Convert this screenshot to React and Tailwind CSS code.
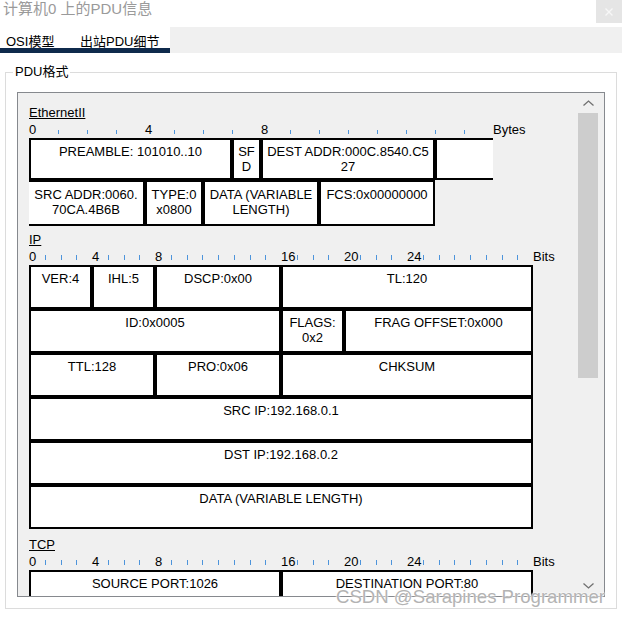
import React from "react";

const cellBase =
  "shrink-0 border-2 border-black bg-white text-center text-[13px] leading-[15px] whitespace-nowrap";

const byteMarks = { 0: "0", 4: "4", 8: "8" };
const bitMarks = { 0: "0", 4: "4", 8: "8", 16: "16", 20: "20", 24: "24" };

function ByteRuler() {
  return (
    <div className="mt-[2px] flex h-[16px] text-[13px] leading-[15px]">
      {Array.from({ length: 16 }).map((_, i) => (
        <div key={i} className="h-[16px] w-[29px] shrink-0">
          {byteMarks[i] ? (
            <span>{byteMarks[i]}</span>
          ) : (
            <div className="mt-[8px] h-[4px] w-px bg-[#4d94db]" />
          )}
        </div>
      ))}
      <span>Bytes</span>
    </div>
  );
}

function BitRuler() {
  return (
    <div className="mt-[2px] flex h-[16px] text-[13px] leading-[15px]">
      {Array.from({ length: 32 }).map((_, i) => (
        <div key={i} className="h-[16px] w-[15.75px] shrink-0">
          {bitMarks[i] ? (
            <span className="whitespace-nowrap">{bitMarks[i]}</span>
          ) : (
            <div className="mt-[6px] h-[5px] w-px bg-[#4d94db]" />
          )}
        </div>
      ))}
      <span>Bits</span>
    </div>
  );
}

function Heading({ children }) {
  return <div className="h-[15px] text-[13px] leading-[15px] underline">{children}</div>;
}

const ipRows = [
  [
    ["w-[63px]", "VER:4"],
    ["w-[63px]", "IHL:5"],
    ["w-[126px]", "DSCP:0x00"],
    ["w-[252px]", "TL:120"],
  ],
  [
    ["w-[252px]", "ID:0x0005"],
    ["w-[63px]", <>FLAGS:<br />0x2</>],
    ["w-[189px]", "FRAG OFFSET:0x000"],
  ],
  [
    ["w-[126px]", "TTL:128"],
    ["w-[126px]", "PRO:0x06"],
    ["w-[252px]", "CHKSUM"],
  ],
  [["w-[504px]", "SRC IP:192.168.0.1"]],
  [["w-[504px]", "DST IP:192.168.0.2"]],
  [["w-[504px]", "DATA (VARIABLE LENGTH)"]],
];

function Chevron({ down }) {
  return (
    <svg width="11" height="6" viewBox="0 0 11 6" fill="none">
      <polyline
        points={down ? "0.5,0.5 5.5,5 10.5,0.5" : "0.5,5.5 5.5,1 10.5,5.5"}
        stroke="#707070"
        strokeWidth="1.3"
      />
    </svg>
  );
}

export default function App() {
  return (
    <div className="relative h-[619px] w-[622px] overflow-hidden bg-white font-['Liberation_Sans','Noto_Sans_CJK_SC',sans-serif] text-black">
      {/* title bar */}
      <div className="flex h-[27px] justify-between">
        <div className="pl-[3px] text-[15px] leading-[18px] text-[#9a9a9a]">计算机0 上的PDU信息</div>
        <div className="flex h-[23px] w-[26px] items-center justify-center bg-[#e5e5e5]">
          <svg width="8" height="8" viewBox="0 0 8 8">
            <path d="M0.5 0.5 L7.5 7.5 M7.5 0.5 L0.5 7.5" stroke="#f7f7f7" strokeWidth="1.4" />
          </svg>
        </div>
      </div>

      {/* tabs */}
      <div className="flex h-[26px] bg-[#f0f0f0]">
        <div className="flex w-[170px] border-b-[5px] border-[#0f2a4c] bg-white pt-[7px] text-[13px] leading-[15px]">
          <span className="w-[80px] pl-[6px]">OSI模型</span>
          <span>出站PDU细节</span>
        </div>
      </div>

      {/* group box */}
      <div className="mx-[5px] mt-[19px] h-[537px] border border-[#dcdcdc]">
        <div className="-mt-[9px] ml-[7px] w-fit bg-white px-[2px] text-[13px] leading-[16px]">PDU格式</div>

        <div className="mx-[11px] mt-[12px] flex h-[505px] border border-[#86898e] bg-[#f0f0f0]">
          <div className="w-[560px] shrink-0 overflow-hidden pl-[11px] pt-[12px]">
            {/* Ethernet */}
            <Heading>EthernetII</Heading>
            <ByteRuler />
            <div className="flex">
              <div className={`${cellBase} h-[42px] w-[203px] pt-[4px]`}>PREAMBLE: 101010..10</div>
              <div className={`${cellBase} h-[42px] w-[29px] pt-[4px]`}>SF<br />D</div>
              <div className={`${cellBase} h-[42px] w-[174px] pt-[4px]`}>DEST ADDR:000C.8540.C5<br />27</div>
              <div className={`${cellBase} h-[42px] w-[58px] border-r-0`} />
            </div>
            <div className="flex">
              <div className={`${cellBase} h-[46px] w-[116px] border-l-0 pt-[5px]`}>SRC ADDR:0060.<br />70CA.4B6B</div>
              <div className={`${cellBase} h-[46px] w-[58px] pt-[5px]`}>TYPE:0<br />x0800</div>
              <div className={`${cellBase} h-[46px] w-[116px] pt-[5px]`}>DATA (VARIABLE<br />LENGTH)</div>
              <div className={`${cellBase} h-[46px] w-[116px] pt-[5px]`}>FCS:0x00000000</div>
            </div>

            {/* IP */}
            <div className="mt-[6px]">
              <Heading>IP</Heading>
              <BitRuler />
              {ipRows.map((row, r) => (
                <div key={r} className="flex">
                  {row.map(([w, label], c) => (
                    <div key={c} className={`${cellBase} ${w} h-[44px] pt-[4px]`}>{label}</div>
                  ))}
                </div>
              ))}
            </div>

            {/* TCP */}
            <div className="mt-[8px]">
              <Heading>TCP</Heading>
              <BitRuler />
              <div className="flex">
                <div className={`${cellBase} h-[44px] w-[252px] pt-[4px]`}>SOURCE PORT:1026</div>
                <div className={`${cellBase} h-[44px] w-[252px] pt-[4px]`}>DESTINATION PORT:80</div>
              </div>
            </div>
          </div>

          {/* scrollbar */}
          <div className="flex w-[20px] shrink-0 flex-col">
            <div className="flex h-[20px] items-center justify-center">
              <Chevron />
            </div>
            <div className="h-[265px] bg-[#cdcdcd]" />
            <div className="flex-1" />
            <div className="flex h-[20px] items-center justify-center">
              <Chevron down />
            </div>
          </div>
        </div>
      </div>

      {/* watermark */}
      <div className="absolute left-[336px] top-[588px] whitespace-nowrap font-['Liberation_Sans',sans-serif] text-[18.6px] leading-[18px] text-[#b3b3b3] [text-shadow:0_0_2px_#fff,0_0_2px_#fff]">
        CSDN @Sarapines Programmer
      </div>
    </div>
  );
}
